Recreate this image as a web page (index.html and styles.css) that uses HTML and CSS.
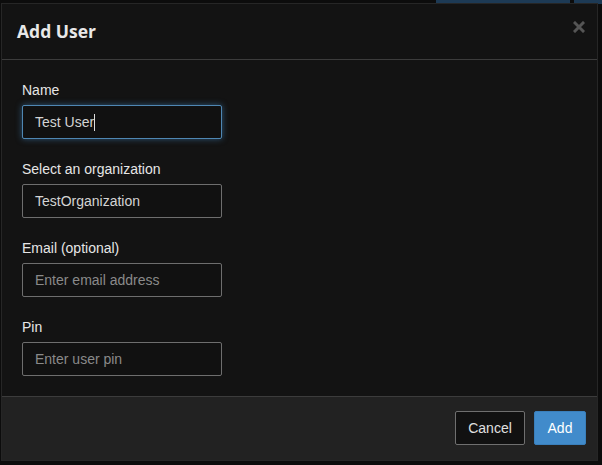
FILE: index.html
```html
<!DOCTYPE html>
<html>
<head>
<meta charset="utf-8">
<link rel="stylesheet" href="styles.css">
</head>
<body>
<div class="backdrop-bar bar-a"></div>
<div class="backdrop-bar bar-b"></div>
<div class="modal">
  <div class="modal-header">
    <h4 class="modal-title">Add User</h4>
    <svg class="close" width="12" height="12" viewBox="0 0 12 12" aria-label="Close"><path d="M2 2 L10 10 M10 2 L2 10" stroke="#555" stroke-width="3" stroke-linecap="square"/></svg>
  </div>
  <div class="modal-body">
    <div class="group">
      <label class="label">Name</label>
      <div class="input focus">Test User<span class="caret"></span></div>
    </div>
    <div class="group">
      <label class="label">Select an organization</label>
      <div class="input">TestOrganization</div>
    </div>
    <div class="group">
      <label class="label">Email (optional)</label>
      <div class="input placeholder">Enter email address</div>
    </div>
    <div class="group last">
      <label class="label">Pin</label>
      <div class="input placeholder">Enter user pin</div>
    </div>
  </div>
  <div class="modal-footer">
    <button class="btn btn-cancel">Cancel</button>
    <button class="btn btn-add">Add</button>
  </div>
</div>
</body>
</html>
```
FILE: styles.css
```css
* { box-sizing: border-box; }
html, body { margin: 0; padding: 0; }
body {
  background: #0c0c0c;
  width: 602px;
  height: 465px;
  overflow: hidden;
  position: relative;
  font-family: "Liberation Sans", Arial, sans-serif;
  padding: 3px 4px 4px 1px;
}
.backdrop-bar {
  position: absolute;
  top: 0;
  height: 4px;
  background: #1d3a55;
}
.bar-a { left: 436px; width: 134px; }
.bar-b { left: 574px; width: 28px; }
.modal {
  position: relative;
  background: #131313;
  border: 1px solid #262626;
  width: 597px;
  height: 458px;
  display: flex;
  flex-direction: column;
}
.modal-header {
  display: flex;
  align-items: center;
  justify-content: space-between;
  padding: 15px 12px 15px 15px;
  height: 56px;
  border-bottom: 1px solid #3c3c3c;
}
.modal-title {
  margin: 0;
  font-family: "Open Sans", sans-serif;
  font-weight: 700;
  font-size: 17.5px;
  color: #e8e8e8;
  line-height: 24px;
}
.close {
  display: block;
  margin-top: -8px;
}
.modal-body {
  flex: 1;
  padding: 20px 20px 0 20px;
}
.group { margin-bottom: 20px; }
.label {
  display: block;
  font-size: 14px;
  line-height: 20px;
  color: #e6e6e6;
  margin-bottom: 5px;
}
.input {
  width: 200px;
  height: 34px;
  border: 1px solid #6e6e6e;
  border-radius: 2px;
  background: #111;
  color: #d4d4d4;
  font-size: 14px;
  line-height: 32px;
  padding: 0 12px;
}
.input.focus {
  border-color: #4f87b3;
  box-shadow: 0 0 6px rgba(70, 140, 200, 0.55);
}
.caret {
  display: inline-block;
  width: 1px;
  height: 17px;
  background: #ddd;
  vertical-align: -4px;
}
.input.placeholder { color: #8a8a8a; }
.modal-footer {
  height: 65px;
  background: #222;
  border-top: 1px solid #3c3c3c;
  display: flex;
  justify-content: flex-end;
  align-items: center;
  gap: 9px;
  padding: 0 11px;
}
.btn {
  height: 34px;
  font-family: "Liberation Sans", Arial, sans-serif;
  font-size: 14px;
  border-radius: 2px;
  padding: 0 12px;
}
.btn-cancel {
  background: #111;
  color: #e0e0e0;
  border: 1px solid #6f6f6f;
  width: 70px;
}
.btn-add {
  background: #418bcb;
  color: #fff;
  border: 1px solid #3a7fbb;
  width: 52px;
}
```
